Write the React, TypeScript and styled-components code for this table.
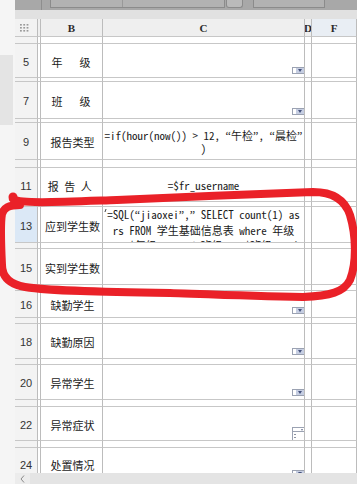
import React from 'react';
import styled, { createGlobalStyle } from 'styled-components';

const GlobalStyle = createGlobalStyle`
  html, body {
    margin: 0;
    padding: 0;
    background: #ffffff;
  }
  body {
    width: 357px;
    height: 484px;
    overflow: hidden;
    font-family: "Liberation Sans", Arial, sans-serif;
  }
`;

const LINE_H = '#c7c7c7';
const LINE_V = '#bcbcbc';

const Page = styled.div`
  position: relative;
  width: 357px;
  height: 484px;
  overflow: hidden;
  display: flex;
  background: #ffffff;
`;

const SideStrip = styled.div`
  width: 15px;
  flex: none;
  display: flex;
  flex-direction: column;
  background: #f5f5f5;
`;

const SideSpacer = styled.div`
  height: 55px;
  flex: none;
`;

const SidePanel = styled.div`
  height: 70px;
  width: 13px;
  flex: none;
  background: #e4e4e4;
`;

const Main = styled.div`
  flex: 1;
  min-width: 0;
  display: flex;
  flex-direction: column;
`;

/* dark strip of the designer toolbar above the sheet */
const Toolbar = styled.div`
  height: 10px;
  flex: none;
  display: flex;
  align-items: flex-start;
  background: #a8a8a8;
  overflow: hidden;
`;

const ToolDivider = styled.div`
  margin-left: 26px;
  width: 1px;
  height: 10px;
  background: #8e8e8e;
`;

const ToolField = styled.div<{ $w: number; $gap: number }>`
  margin-left: ${(p) => p.$gap}px;
  width: ${(p) => p.$w}px;
  height: 8px;
  box-sizing: border-box;
  border: 1px solid #8b8b8b;
  border-top: none;
  background: #b2b2b2;
  display: flex;
`;

const ToolFieldPart = styled.div`
  width: 71px;
  height: 100%;
  border-right: 1px solid #999999;
`;

const ToolKnob = styled.div`
  margin-left: 1px;
  width: 17px;
  height: 8px;
  box-sizing: border-box;
  border: 1px solid #8b8b8b;
  border-top: none;
  border-radius: 0 0 3px 3px;
  background: #bababa;
`;

const Band = styled.div`
  height: 9px;
  flex: none;
  background: #e1e1e1;
`;

const Sheet = styled.div`
  flex: 1;
  min-height: 0;
  overflow: hidden;
  display: flex;
  flex-direction: column;
`;

const Row = styled.div<{ $h: number }>`
  height: ${(p) => p.$h}px;
  flex: none;
  display: grid;
  grid-template-columns: 23px 3px 62px 202px 7px 1fr;
`;

const Cell = styled.div`
  box-sizing: border-box;
  border-right: 1px solid ${LINE_V};
  border-bottom: 1px solid ${LINE_H};
  overflow: hidden;
  min-width: 0;
`;

const Corner = styled(Cell)`
  background: #f2f2f2;
  display: flex;
  align-items: center;
  justify-content: center;
  padding-right: 2px;
`;

const ColHead = styled(Cell)<{ $tint?: boolean }>`
  background: ${(p) => (p.$tint ? '#e9eef4' : '#efefef')};
  display: flex;
  align-items: center;
  justify-content: center;
  font-family: "Liberation Serif", "Times New Roman", serif;
  font-weight: bold;
  font-size: 11px;
  color: #2a2a2a;
  padding-top: 1px;
`;

const RowHead = styled(Cell)<{ $sel?: boolean }>`
  background: ${(p) => (p.$sel ? '#dbe8f6' : '#f3f3f3')};
  display: flex;
  align-items: center;
  justify-content: center;
  padding-top: 2px;
  font-size: 11px;
  color: #333333;
`;

const Plain = styled(Cell)`
  background: #ffffff;
`;

const Label = styled(Cell)<{ $ls: number }>`
  background: #ffffff;
  display: flex;
  align-items: center;
  justify-content: center;
  padding-left: 2px;
  padding-top: 2px;
  white-space: nowrap;
  font-family: "Noto Sans CJK SC", sans-serif;
  font-size: 11px;
  letter-spacing: ${(p) => p.$ls}px;
  color: #1b1b1b;
`;

const Expr = styled(Cell)<{ $top?: boolean; $lh: number }>`
  position: relative;
  background: #ffffff;
  display: flex;
  flex-direction: column;
  justify-content: ${(p) => (p.$top ? 'flex-start' : 'center')};
  align-items: center;
  font-family: "Noto Sans Mono CJK SC", "Liberation Mono", monospace;
  font-size: 11px;
  line-height: ${(p) => p.$lh}px;
  color: #1b1b1b;
  white-space: nowrap;
`;

const ExprLine = styled.div`
  text-align: center;
`;

/* curly quotes kept narrow, as in the designer's half-width font */
const Q = styled.span`
  font-family: "Liberation Serif", serif;
  font-size: 12px;
  display: inline-block;
  width: 5.5px;
  text-align: center;
`;

const ExprMark = styled.span`
  position: absolute;
  left: 2px;
  top: 2px;
  width: 1px;
  height: 3px;
  background: #444444;
  transform: skewX(-20deg);
`;

const Widget = styled(Cell)`
  background: #ffffff;
  display: flex;
  align-items: flex-end;
  justify-content: flex-end;
  padding-bottom: 3px;
`;

const WidgetTall = styled(Widget)`
  padding-bottom: 0;
`;

/* combo box marker in the cell corner */
const Combo = styled.div`
  width: 12px;
  height: 7px;
  box-sizing: border-box;
  border: 1px solid #9ba2b2;
  border-right: none;
  background: #ffffff;
  display: flex;
`;

const ComboButton = styled.div`
  margin-left: 3px;
  flex: 1;
  background: #c6cee2;
  display: flex;
  align-items: center;
  justify-content: center;
  &::after {
    content: '';
    border-left: 2.5px solid transparent;
    border-right: 2.5px solid transparent;
    border-top: 3px solid #45527d;
  }
`;

const Picker = styled.div`
  width: 12px;
  height: 13px;
  display: flex;
  flex-direction: column;
`;

const PickerHead = styled.div`
  height: 5px;
  box-sizing: border-box;
  border: 1px solid #9ba2b2;
  border-right: none;
  display: flex;
  justify-content: flex-end;
  &::after {
    content: '';
    margin: 1px 1px 0 0;
    border-left: 1.5px solid transparent;
    border-right: 1.5px solid transparent;
    border-top: 2px solid #6a7390;
  }
`;

const PickerTail = styled.div`
  width: 3px;
  flex: 1;
  border-left: 1px solid #9ba2b2;
  background: linear-gradient(#fff 2px, #8d93a3 2px, #8d93a3 3px, #fff 3px, #fff 5px, #8d93a3 5px, #8d93a3 6px, #fff 6px);
  background-size: 2px 100%;
  background-repeat: no-repeat;
  background-position: 1px 0;
`;

const ScrollBar = styled.div`
  height: 11px;
  flex: none;
  display: flex;
  background: #e4e4e4;
`;

const ScrollButton = styled.div`
  width: 15px;
  flex: none;
  display: flex;
  align-items: center;
  justify-content: center;
  background: #ececec;
`;

const Ink = styled.svg`
  position: absolute;
  left: 0;
  top: 0;
  pointer-events: none;
`;

type Kind = 'combo' | 'picker' | 'if' | 'user' | 'sql' | 'none';

type RowSpec = {
  n?: number;
  h: number;
  label?: string;
  ls?: number;
  kind?: Kind;
  sel?: boolean;
};

const rows: RowSpec[] = [
  { h: 7 },
  { n: 5, h: 34, label: '年　级', ls: 3, kind: 'combo' },
  { h: 4 },
  { n: 7, h: 37, label: '班　级', ls: 3, kind: 'combo' },
  { h: 4 },
  { n: 9, h: 37, label: '报告类型', ls: 0, kind: 'if' },
  { h: 8 },
  { n: 11, h: 34, label: '报告人', ls: 5.5, kind: 'user' },
  { h: 5 },
  { n: 13, h: 36, label: '应到学生数', ls: 0, kind: 'sql', sel: true },
  { h: 6 },
  { n: 15, h: 36, label: '实到学生数', ls: 0 },
  { h: 6 },
  { n: 16, h: 27, label: '缺勤学生', ls: 0, kind: 'combo' },
  { h: 6 },
  { n: 18, h: 35, label: '缺勤原因', ls: 0, kind: 'combo' },
  { h: 6 },
  { n: 20, h: 35, label: '异常学生', ls: 0, kind: 'combo' },
  { h: 7 },
  { n: 22, h: 34, label: '异常症状', ls: 0, kind: 'picker' },
  { h: 7 },
  { n: 24, h: 33, label: '处置情况', ls: 0, kind: 'combo' },
];

function DataCell({ kind }: { kind?: Kind }) {
  switch (kind) {
    case 'combo':
      return (
        <Widget>
          <Combo>
            <ComboButton />
          </Combo>
        </Widget>
      );
    case 'picker':
      return (
        <WidgetTall>
          <Picker>
            <PickerHead />
            <PickerTail />
          </Picker>
        </WidgetTall>
      );
    case 'if':
      return (
        <Expr $lh={12}>
          <ExprLine>
            =if(hour(now()) &gt; 12, <Q>“</Q>午检<Q>”</Q>, <Q>“</Q>晨检<Q>”</Q>
          </ExprLine>
          <ExprLine>)</ExprLine>
        </Expr>
      );
    case 'user':
      return (
        <Expr $lh={12}>
          <ExprLine>=$fr_username</ExprLine>
        </Expr>
      );
    case 'sql':
      return (
        <Expr $top $lh={15}>
          <ExprMark />
          <ExprLine>
            =SQL(<Q>“</Q>jiaoxei<Q>”</Q>,<Q>”</Q> SELECT count(1) as
          </ExprLine>
          <ExprLine>rs FROM 学生基础信息表 where 年级</ExprLine>
          <ExprLine>
            =<Q>’</Q>
            <Q>”</Q>+$年级+<Q>”</Q>
            <Q>’</Q> and 班级=<Q>’</Q>
            <Q>”</Q>+$班级+<Q>”</Q>
            <Q>’</Q>
            <Q>”</Q>)
          </ExprLine>
        </Expr>
      );
    default:
      return <Plain />;
  }
}

function GridDots() {
  const dots = [];
  for (let r = 0; r < 3; r++) {
    for (let c = 0; c < 3; c++) {
      dots.push(<rect key={`${r}-${c}`} x={c * 3.3} y={r * 3} width={1.8} height={1.6} fill="#9a9a9a" />);
    }
  }
  return (
    <svg width="10" height="8" viewBox="0 0 10 8">
      {dots}
    </svg>
  );
}

export default function App() {
  return (
    <>
      <GlobalStyle />
      <Page>
        <SideStrip>
          <SideSpacer />
          <SidePanel />
        </SideStrip>
        <Main>
          <Toolbar>
            <ToolDivider />
            <ToolField $w={175} $gap={8}>
              <ToolFieldPart />
            </ToolField>
            <ToolKnob />
            <ToolField $w={72} $gap={10} />
          </Toolbar>
          <Band />
          <Sheet>
            <Row $h={18}>
              <Corner>
                <GridDots />
              </Corner>
              <ColHead />
              <ColHead>B</ColHead>
              <ColHead>C</ColHead>
              <ColHead>D</ColHead>
              <ColHead $tint>F</ColHead>
            </Row>
            {rows.map((r, i) => (
              <Row key={i} $h={r.h}>
                <RowHead $sel={r.sel}>{r.n ?? ''}</RowHead>
                <Plain />
                {r.label ? <Label $ls={r.ls ?? 0}>{r.label}</Label> : <Plain />}
                {r.n ? <DataCell kind={r.kind} /> : <Plain />}
                <Plain />
                <Plain />
              </Row>
            ))}
          </Sheet>
          <ScrollBar>
            <ScrollButton>
              <svg width="5" height="8" viewBox="0 0 5 8">
                <polyline points="4,0.5 1,4 4,7.5" fill="none" stroke="#8a8a8a" strokeWidth="1" />
              </svg>
            </ScrollButton>
          </ScrollBar>
        </Main>
        <Ink width="357" height="484" viewBox="0 0 357 484">
          <circle cx="13" cy="197" r="4.5" fill="#ea2128" />
          <path
            d="M 13 199 C 20 204, 60 202, 117 200 C 180 197, 250 194, 313 192 C 333 192, 345 200, 350 215 C 356 235, 357 262, 350 280 C 344 292, 330 296, 303 297 C 250 296, 200 294, 170 293 C 100 292, 50 291, 25 287 C 8 284, 2 276, 2 265 C 1 245, 0 225, 2 214 C 4 208, 8 205, 20 205"
            fill="none"
            stroke="#ea2128"
            strokeWidth="8"
            strokeLinecap="round"
            strokeLinejoin="round"
          />
        </Ink>
      </Page>
    </>
  );
}
